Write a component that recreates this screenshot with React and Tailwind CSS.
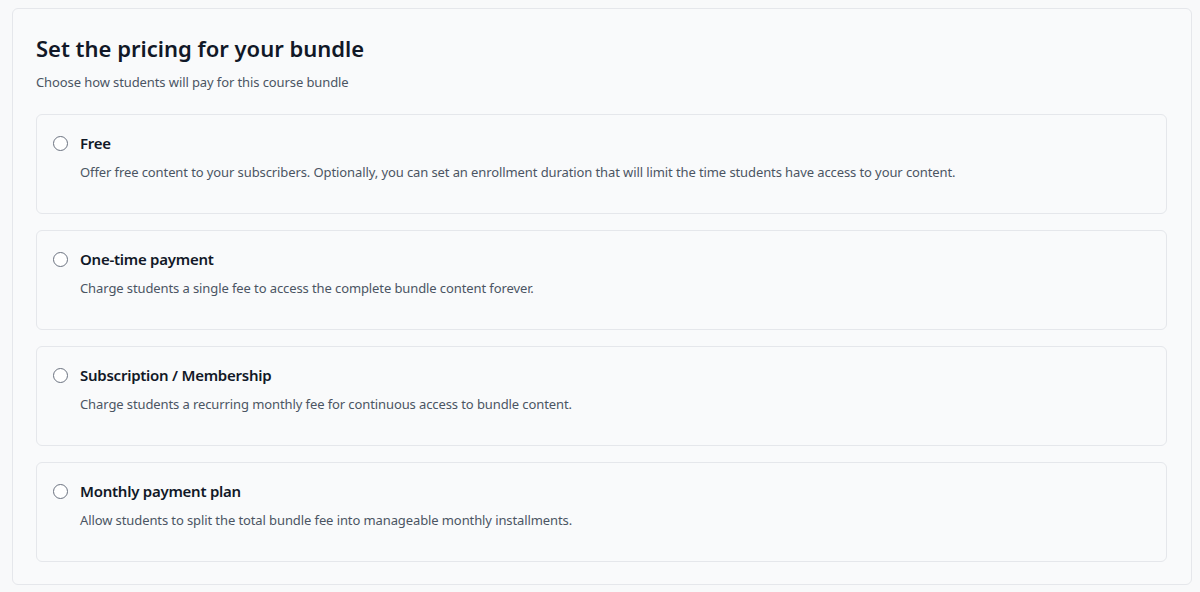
import React from "react";

const options = [
  {
    title: "Free",
    desc: "Offer free content to your subscribers. Optionally, you can set an enrollment duration that will limit the time students have access to your content.",
  },
  {
    title: "One-time payment",
    desc: "Charge students a single fee to access the complete bundle content forever.",
  },
  {
    title: "Subscription / Membership",
    desc: "Charge students a recurring monthly fee for continuous access to bundle content.",
  },
  {
    title: "Monthly payment plan",
    desc: "Allow students to split the total bundle fee into manageable monthly installments.",
  },
];

export default function App() {
  return (
    <div
      className="min-h-[592px] w-[1200px] bg-[#f8f9fa] pl-3 pr-2 pt-2 pb-2"
      style={{ fontFamily: '"Noto Sans", "Open Sans", sans-serif' }}
    >
      <div className="w-[1180px] rounded-md border border-[#e5e7eb] bg-[#f9fafb] pl-[23px] pr-[24px] pt-[23px] pb-[22px]">
        <h1 className="text-[22px] leading-[32px] font-semibold text-[#111827]">
          Set the pricing for your bundle
        </h1>
        <p className="mt-[8px] text-[13px] leading-[20px] tracking-[-0.1px] text-[#4b5563]">
          Choose how students will pay for this course bundle
        </p>
        <div className="mt-[22px] flex flex-col gap-4">
          {options.map((o) => (
            <div
              key={o.title}
              className="h-[100px] rounded-md border border-[#e5e7eb] bg-[#f9fafb] px-4 pt-4"
            >
              <div className="flex items-center gap-3">
                <span className="h-[15px] w-[15px] shrink-0 rounded-full border border-[#6b7280] bg-white" />
                <span className="text-[15px] leading-[24px] tracking-[-0.25px] font-semibold text-[#111827]">
                  {o.title}
                </span>
              </div>
              <p className="mt-[7px] pl-[27px] text-[13px] leading-[20px] tracking-[-0.1px] text-[#4b5563]">
                {o.desc}
              </p>
            </div>
          ))}
        </div>
      </div>
    </div>
  );
}
